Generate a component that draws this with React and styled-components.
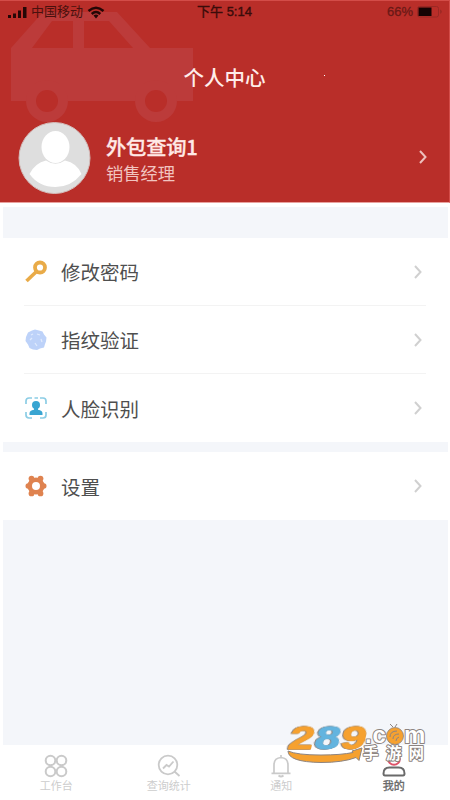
import React from "react";
import styled, { createGlobalStyle } from "styled-components";

const menus = [
  [
    { icon: 'key', label: '修改密码' },
    { icon: 'finger', label: '指纹验证' },
    { icon: 'face', label: '人脸识别' },
  ],
  [{ icon: 'gear', label: '设置' }],
]

const tabs = [
  { icon: 'work', label: '工作台' },
  { icon: 'stats', label: '查询统计' },
  { icon: 'bell', label: '通知' },
  { icon: 'mine', label: '我的', active: true },
]

const Icon = ({ name }) => {
  if (name === 'key') return (
    <svg width="24" height="24" viewBox="0 0 24 24" fill="none" stroke="#E9AB48">
      <circle cx="16" cy="7.5" r="5" strokeWidth="3.8"/>
      <path d="M12.500 11.500L2.500 21" strokeWidth="3.6"/>
    </svg>
  )
  if (name === 'finger') return (
    <svg width="24" height="24" viewBox="0 0 24 24">
      <path d="M4 4.500L8 2.500 11 1.500l4 1 3.500 1 1.500 3 2.500 3-.5 4-1 2.500-1 3.500-4 1-3 1.500-4-.5-3.500-1.500-1.500-3.500L1.500 13 2 9z" fill="#BDD2F9"/>
      <path d="M7 7l2-1M13 6l3 1M6 12l2-2M17 11l1 3M11 15l2 3" stroke="#DFEAFD" strokeWidth="1.3" fill="none"/>
    </svg>
  )
  if (name === 'face') return (
    <svg width="24" height="24" viewBox="0 0 24 24" fill="none" stroke="#8CCDE5" strokeWidth="1.7">
      <path d="M2 8V5Q2 2 5 2H8M10.500 2H14M16 2h3q3 0 3 3v3M22 16v3q0 3-3 3h-3M8 22H5q-3 0-3-3v-3"/>
      <circle cx="12" cy="9" r="4" fill="#39A5D2" stroke="none"/>
      <path d="M5.500 19v-1.500q0-3 4.500-3.700v-2h4v2q4.500.7 4.500 3.700v1.500z" fill="#39A5D2" stroke="none"/>
    </svg>
  )
  if (name === 'gear') return (
    <svg width="24" height="24" viewBox="0 0 24 24" fill="none" stroke="#DF8350">
      <circle cx="12" cy="12" r="6.300" strokeWidth="4.600"/>
      <g fill="#DF8350" stroke="none">
        <circle cx="7.500" cy="4.600" r="2.900"/>
        <circle cx="16.500" cy="4.600" r="2.900"/>
        <circle cx="19.800" cy="12" r="2.700"/>
        <circle cx="16.500" cy="19.400" r="2.900"/>
        <circle cx="7.500" cy="19.400" r="2.900"/>
        <circle cx="4.200" cy="12" r="2.700"/>
      </g>
    </svg>
  )
  if (name === 'work') return (
    <svg width="26" height="26" viewBox="0 0 26 26" fill="none" stroke="#CACACA" strokeWidth="2">
      <circle cx="7.500" cy="7.500" r="4.800"/>
      <circle cx="18.500" cy="7.500" r="4.800"/>
      <circle cx="7.500" cy="18.500" r="4.800"/>
      <circle cx="18.500" cy="18.500" r="4.800"/>
    </svg>
  )
  if (name === 'stats') return (
    <svg width="26" height="26" viewBox="0 0 26 26" fill="none" stroke="#CACACA" strokeWidth="1.8">
      <circle cx="12" cy="12" r="9.300"/>
      <path d="M18.500 18.500l5 4.500M7 15.500l3.500-3.500 2.500 1.500 4.500-5"/>
    </svg>
  )
  if (name === 'bell') return (
    <svg width="26" height="26" viewBox="0 0 26 26" fill="none" stroke="#CACACA" strokeWidth="1.700">
      <path d="M13 2v2.500M6 20v-8q0-7 7-7.500 7 .5 7 7.500v8M3.500 20.300h19M10.500 22.500q2.500 2 5 0"/>
    </svg>
  )
  return (
    <svg width="26" height="26" viewBox="0 0 26 26" fill="none" strokeWidth="2">
      <circle cx="13" cy="6" r="5.800" stroke="#DE5268"/>
      <path d="M2.500 20.500q0-6 6-6h9q6 0 6 6 0 2-1.500 2H4q-1.500 0-1.500-2z" fill="#fff" stroke="#6A6A6A"/>
    </svg>
  )
}

const Arrow = ({ color }) => (
  <svg width="10" height="16" viewBox="0 0 10 16" fill="none" stroke={color} strokeWidth="2">
    <path d="M2 2l5.500 6L2 14"/>
  </svg>
)

const App = () => {
  return (
    <Page>
      <GlobalStyle/>
      <Header>
        <Car viewBox="0 0 200 124">
          <path fillRule="evenodd" d="M43 12H117L150 48H193V101H11V48ZM32 48H73V21H52ZM84 21V48H133L109 21Z"/>
          <circle cx="47" cy="101" r="21"/>
          <circle cx="156" cy="101" r="21"/>
          <circle cx="47" cy="101" r="11" fill="#B92E29"/>
          <circle cx="156" cy="101" r="11" fill="#B92E29"/>
        </Car>
        <StatusBar>
          <Carrier>
            <svg width="19" height="13" viewBox="0 0 19 13" fill="#240706">
              <path d="M0 9h3v3H0zM5 7.500h3V12H5zM10 4.500h3V12h-3zM15 1h3.500v11H15z"/>
            </svg>
            <span>中国移动</span>
            <svg width="18" height="13" viewBox="0 0 18 13" fill="none" stroke="#240706" strokeWidth="2.500">
              <path d="M1.500 5Q9-1.500 16.500 5M4.700 8Q9 4 13.300 8"/>
              <path d="M6.500 9.500Q9 7.500 11.500 9.500L9 12.500z" fill="#240706" stroke="none"/>
            </svg>
          </Carrier>
          <Time>下午 5:14</Time>
          <Power>
            <span>66%</span>
            <svg width="26" height="12" viewBox="0 0 26 12">
              <rect x=".5" y=".5" width="21" height="10.500" rx="2" fill="none" stroke="#9A2824"/>
              <rect x="1.500" y="1.500" width="13" height="8.500" fill="#160303"/>
              <path d="M23.500 3.500q2 2.200 0 4.500z" fill="#852421"/>
            </svg>
          </Power>
        </StatusBar>
        <Title>个人中心</Title>
        <Profile>
          <Avatar viewBox="0 0 74 74">
            <circle cx="37.500" cy="38" r="35.500" fill="#DEDEDE" stroke="#D3BDBB" strokeWidth="1"/>
            <ellipse cx="38.500" cy="27" rx="14" ry="16" fill="#fff"/>
            <path d="M12.500 54Q18 43 29 40.500Q38.500 47 48 40.500Q60 43 64.500 54Q54 67 38.500 67Q22 67 12.500 54Z" fill="#fff"/>
          </Avatar>
          <UserInfo>
            <UserName>外包查询1</UserName>
            <Role>销售经理</Role>
          </UserInfo>
          <Arrow color="#EDC0BD"/>
        </Profile>
        <Dot/>
      </Header>
      <Content>
        {menus.map((menu, i) => (
          <Menu key={i}>
            {menu.map((item) => (
              <MenuItem key={item.label}>
                <Icon name={item.icon}/>
                <MenuLabel>{item.label}</MenuLabel>
                <Arrow color="#D0D0D0"/>
              </MenuItem>
            ))}
          </Menu>
        ))}
      </Content>
      <TabBar>
        {tabs.map((tab) => (
          <Tab key={tab.label} $active={tab.active}>
            <Icon name={tab.icon}/>
            <span>{tab.label}</span>
          </Tab>
        ))}
      </TabBar>
      <Watermark viewBox="0 0 150 50">
        <path d="M5 32Q14 36 38 36Q58 36 70 33.500L69 32L79 29L76 41.500L73 38.500Q60 43.500 38 43.500Q5 43 5 32Z" fill="#F6A12F" stroke="#8D8480" strokeWidth="1"/>
        <Digits transform="translate(4 30) skewX(-13)">
          <text x="0" y="0" textLength="25" lengthAdjust="spacingAndGlyphs" fill="#F6A12F" stroke="#F6A12F">2</text>
          <text x="26" y="0" textLength="25" lengthAdjust="spacingAndGlyphs" fill="#63B4DF" stroke="#63B4DF">8</text>
          <text x="52" y="0" textLength="25" lengthAdjust="spacingAndGlyphs" fill="#F6A12F" stroke="#F6A12F">9</text>
        </Digits>
        <Letters>
          <text x="82 89.500 104 121" y="24" fontSize="24">.com</text>
          <circle cx="112" cy="17" r="8.500" fill="#F6A12F" stroke="#8D8480" strokeWidth=".8"/>
          <path d="M107 18q0-6 7-6M110 20q0-5 6-5M113 22q0-3 3-4M110 8l-3-3M112 8l2-3" fill="none" stroke="#8D8480" strokeWidth="1"/>
          <text x="80 103 125.500" y="40" fontSize="15.500">手游网</text>
        </Letters>
      </Watermark>
    </Page>
  )
}

export default App;

const GlobalStyle = createGlobalStyle`
  body {
    margin: 0;
    background: #FFFFFF;
    font-family: 'Liberation Sans', 'Noto Sans CJK SC', sans-serif;
  }
  * {
    box-sizing: border-box;
  }
  svg {
    flex: none;
  }
`

const Page = styled.div`
  position: relative;
  width: 450px;
  height: 800px;
  display: flex;
  flex-direction: column;
  overflow: hidden;
`

const Header = styled.div`
  position: relative;
  height: 203px;
  display: flex;
  flex-direction: column;
  background: #B92E29;
  border-top: 1px solid #D34C48;
  border-right: 1px solid #D34C48;
  border-bottom: 1px solid #E9A19E;
`

const Car = styled.svg`
  position: absolute;
  top: -1px;
  left: 0;
  width: 200px;
  height: 124px;
  fill: #BC3B3A;
`

const Dot = styled.i`
  position: absolute;
  left: 324px;
  top: 74px;
  width: 1px;
  height: 1px;
  background: #FFFFFF;
`

const StatusBar = styled.div`
  position: relative;
  height: 22px;
  padding: 0 6px 0 8px;
  display: grid;
  grid-template-columns: 1fr auto 1fr;
  align-items: center;
  font-size: 13px;
  line-height: 22px;
  color: #4A110E;
`

const Carrier = styled.div`
  display: flex;
  align-items: center;
  gap: 4px;
`

const Time = styled.div`
  margin-right: 2px;
  color: #3B0C0A;
  -webkit-text-stroke: 0.4px;
`

const Power = styled.div`
  display: flex;
  align-items: center;
  justify-content: flex-end;
  gap: 4px;
  color: #6A1916;
  -webkit-text-stroke: 0.3px;
`

const Title = styled.div`
  position: relative;
  margin-top: 40px;
  height: 32px;
  line-height: 32px;
  text-align: center;
  font-size: 20.5px;
  font-weight: 500;
  color: #FFEDEA;
`

const Profile = styled.div`
  position: relative;
  margin-top: 25px;
  padding: 0 21px 0 17px;
  display: flex;
  align-items: center;
`

const Avatar = styled.svg`
  width: 74px;
  height: 74px;
`

const UserInfo = styled.div`
  flex: 1;
  margin-left: 15px;
  padding-top: 6px;
`

const UserName = styled.div`
  font-family: 'Noto Sans CJK SC', sans-serif;
  font-size: 20.3px;
  line-height: 28px;
  font-weight: 500;
  letter-spacing: -0.2px;
  color: #FFE9E6;
  -webkit-text-stroke: 0.3px;
`

const Role = styled.div`
  font-size: 17.3px;
  line-height: 28px;
  color: #F1C4C0;
`

const Content = styled.div`
  flex: 1;
  margin: 4px 2px 0 3px;
  padding-top: 31px;
  display: flex;
  flex-direction: column;
  gap: 10px;
  background: #F4F6FA;
`

const Menu = styled.div`
  background: #FFFFFF;
`

const MenuItem = styled.div`
  height: 68px;
  margin: 0 22px 0 21px;
  padding-right: 3px;
  display: flex;
  align-items: center;
  border-bottom: 1px solid #F3F3F3;

  &:last-child {
    border-bottom: none;
  }
`

const MenuLabel = styled.div`
  flex: 1;
  margin-left: 13px;
  font-size: 19.5px;
  color: #4F4F4F;
`

const TabBar = styled.div`
  height: 55px;
  display: flex;
  background: #FFFFFF;
`

const Tab = styled.div`
  flex: 1;
  padding-top: 8px;
  display: flex;
  flex-direction: column;
  align-items: center;
  font-size: 11px;
  line-height: 15px;
  color: ${(props) => (props.$active ? '#666666' : '#CDCDCD')};
  -webkit-text-stroke: ${(props) => (props.$active ? '0.3px' : '0')};
`

const Watermark = styled.svg`
  position: absolute;
  left: 283px;
  top: 719px;
  width: 150px;
  height: 50px;
`

const Digits = styled.g`
  font: bold 33px 'Liberation Sans', sans-serif;
  stroke-width: 1;
  stroke-linejoin: round;
  filter: drop-shadow(0.7px 0 0 #8D8480) drop-shadow(-0.7px 0 0 #8D8480);
`

const Letters = styled.g`
  font-family: 'Liberation Sans', 'Noto Sans CJK SC', sans-serif;
  font-weight: bold;

  text {
    fill: #FFFFFF;
    stroke: #8D8480;
    stroke-width: 2px;
    stroke-linejoin: round;
    paint-order: stroke;
  }
`
